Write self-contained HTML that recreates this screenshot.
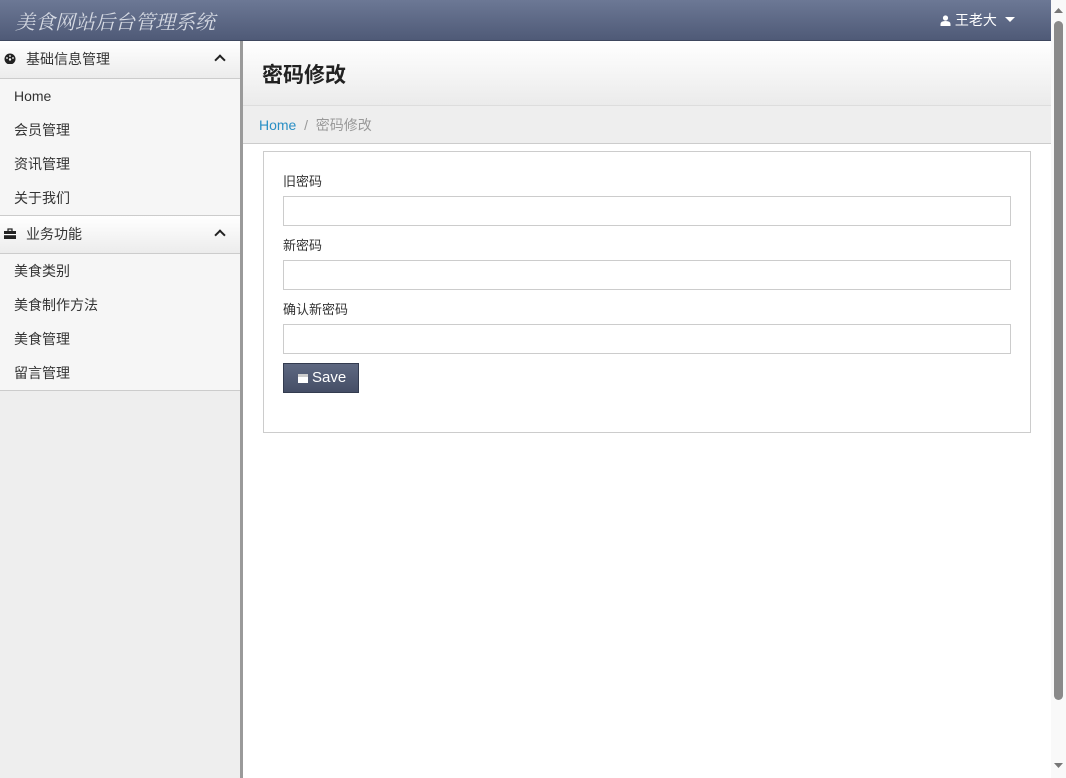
<!DOCTYPE html>
<html><head><meta charset="utf-8"><style>
*{box-sizing:border-box;margin:0;padding:0}
body{width:1066px;height:778px;overflow:hidden;font-family:"Liberation Sans","Noto Sans CJK SC",sans-serif;font-size:14px;color:#333;background:#fff;position:relative}
.hdr{position:absolute;left:0;top:0;width:1051px;height:41px;background:linear-gradient(#6c7895,#4f5a77);border-bottom:1px solid #3e475e}
.logo{position:absolute;left:15px;top:6px;color:#d6dae3;font-size:20px;font-style:italic;font-family:"Liberation Serif","Noto Serif CJK SC",serif}
.user{position:absolute;left:940px;top:10px;color:#fff;font-size:14px}
.side{position:absolute;left:0;top:41px;width:240px;height:737px;background:#eee}
.sbar{position:absolute;left:240px;top:41px;width:3px;height:737px;background:#9a9a9a}
.sh{height:38px;background:linear-gradient(#fff,#ececec);border-bottom:1px solid #ccc;border-top:1px solid #ddd;padding:0 0 0 26px;line-height:36px;position:relative}
.sh .ic{position:absolute;left:4px;top:12px;width:12px;height:11px}
.sh .car{position:absolute;right:16px;top:15px;width:8px;height:8px;border-left:2.5px solid #222;border-top:2.5px solid #222;transform:rotate(45deg)}
.it{height:34px;line-height:34px;padding-left:14px;background:#f6f6f6}
.items{border-bottom:1px solid #ccc}
.ph{position:absolute;left:243px;top:41px;width:808px;height:65px;background:linear-gradient(#fff,#ebebeb);border-bottom:1px solid #ddd}
.ph h1{position:absolute;left:19px;top:18px;font-size:21px;font-weight:bold;color:#222}
.bc{position:absolute;left:243px;top:106px;width:808px;height:38px;background:#eee;border-bottom:1px solid #ccc;padding:9px 16px;font-size:14px;color:#999}
.bc a{color:#2a8fc5;text-decoration:none}
.box{position:absolute;left:263px;top:151px;width:768px;height:282px;border:1px solid #ccc}
label{position:absolute;left:19px;font-size:13px;color:#333}
.inp{position:absolute;left:19px;width:728px;height:30px;border:1px solid #ccc}
.btn{position:absolute;left:19px;top:211px;width:76px;height:30px;background:linear-gradient(#5e6881,#454e66);border:1px solid #333b4f;color:#fff;font-size:15px;line-height:27px;padding-left:28px}
.btn i{position:absolute;left:14px;top:10px;width:10px;height:9px;background:#fff;border-top:3px solid #ccc}
.scr{position:absolute;left:1051px;top:0;width:15px;height:778px;background:#f9f9f9}
.thumb{position:absolute;left:3px;top:21px;width:9px;height:679px;background:#8a8a8a;border-radius:5px}
</style></head><body>
<div class="hdr"><div class="logo">美食网站后台管理系统</div>
<div class="user"><svg width="11" height="11" viewBox="0 0 11 11" style="vertical-align:-1px"><circle cx="5.5" cy="3" r="2.6" fill="#fff"/><path d="M0.5 11V9Q0.5 6 5.5 6Q10.5 6 10.5 9V11Z" fill="#fff"/></svg> 王老大 <svg width="10" height="6" viewBox="0 0 10 6" style="margin-left:4px;vertical-align:2px"><path d="M0 0H10L5 5Z" fill="#fff"/></svg></div></div>
<div class="side">
<div class="sh" style="border-top:none"><svg class="ic" viewBox="0 0 12 11"><circle cx="6" cy="6" r="5.5" fill="#222"/><circle cx="6" cy="6.5" r="1.2" fill="#fff"/><circle cx="3" cy="5" r="0.9" fill="#fff"/><circle cx="6" cy="3" r="0.9" fill="#fff"/><circle cx="9" cy="5" r="0.9" fill="#fff"/></svg>基础信息管理<span class="car"></span></div>
<div class="items"><div class="it">Home</div><div class="it">会员管理</div><div class="it">资讯管理</div><div class="it">关于我们</div></div>
<div class="sh" style="border-top:none"><svg class="ic" viewBox="0 0 12 11"><rect x="0" y="3" width="12" height="8" fill="#222"/><rect x="4" y="1" width="4" height="2.5" fill="none" stroke="#222" stroke-width="1.2"/><rect x="0" y="6" width="12" height="1.2" fill="#fff"/></svg>业务功能<span class="car"></span></div>
<div class="items"><div class="it">美食类别</div><div class="it">美食制作方法</div><div class="it">美食管理</div><div class="it">留言管理</div></div>
</div>
<div class="sbar"></div>
<div class="ph"><h1>密码修改</h1></div>
<div class="bc"><a>Home</a>&nbsp;&nbsp;/&nbsp;&nbsp;密码修改</div>
<div class="box">
<label style="top:19px">旧密码</label><div class="inp" style="top:44px"></div>
<label style="top:83px">新密码</label><div class="inp" style="top:108px"></div>
<label style="top:147px">确认新密码</label><div class="inp" style="top:172px"></div>
<div class="btn"><i></i>Save</div>
</div>
<div class="scr"><svg width="15" height="15" viewBox="0 0 15 15" style="position:absolute;top:3px"><path d="M3 10H12L7.5 5Z" fill="#777"/></svg><div class="thumb"></div><svg width="15" height="15" viewBox="0 0 15 15" style="position:absolute;top:758px"><path d="M3 5H12L7.5 10Z" fill="#777"/></svg></div>
</body></html>
